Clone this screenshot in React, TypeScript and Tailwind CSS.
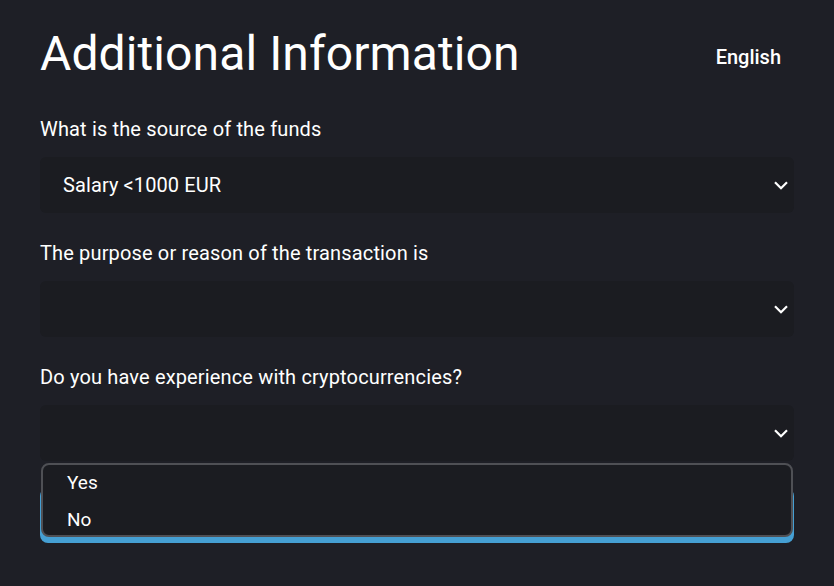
import React from "react";

function Chevron() {
  return (
    <svg width="14" height="9" viewBox="0 0 14 9" fill="none">
      <path d="M1 1.2L7 7.2L13 1.2" stroke="#ffffff" strokeWidth="2.2" />
    </svg>
  );
}

function Select({ value }: { value?: string }) {
  return (
    <div className="h-[56px] rounded-md bg-[#1b1c21] flex items-center justify-between pl-[23px] pr-[6px]">
      <span className="text-[20px] text-white tracking-[0.1px]">{value ?? ""}</span>
      <Chevron />
    </div>
  );
}

export default function App() {
  return (
    <div
      className="w-[834px] h-[586px] bg-[#1e1f26] text-white overflow-hidden"
      style={{ fontFamily: "Roboto, 'Noto Sans', sans-serif" }}
    >
      <div className="px-[40px] pt-[24px]">
        <div className="flex items-center justify-between">
          <h1 className="text-[48px] leading-[60px] font-normal tracking-[0.1px]">Additional Information</h1>
          <span className="text-[20px] font-medium mr-[13px] mt-[6px]">English</span>
        </div>
        <div className="mt-[33px] text-[20px] leading-[24px] tracking-[0.15px]">What is the source of the funds</div>
        <div className="mt-[16px]"><Select value="Salary <1000 EUR" /></div>
        <div className="mt-[28px] text-[20px] leading-[24px] tracking-[0.15px]">The purpose or reason of the transaction is</div>
        <div className="mt-[16px]"><Select /></div>
        <div className="mt-[28px] text-[20px] leading-[24px] tracking-[0.15px]">Do you have experience with cryptocurrencies?</div>
        <div className="mt-[16px] relative">
          <Select />
          <div className="mt-[27px] h-[55px] rounded-lg bg-[#459fd3]" />
          <div className="absolute left-[1px] right-[1px] top-[58px] h-[74px] rounded-lg border-2 border-[#4f5055] bg-[#1b1c21] flex flex-col pt-[7px] pl-[24px] gap-[15px]">
            <div className="text-[19px] leading-[22px]">Yes</div>
            <div className="text-[19px] leading-[22px]">No</div>
          </div>
        </div>
      </div>
    </div>
  );
}
